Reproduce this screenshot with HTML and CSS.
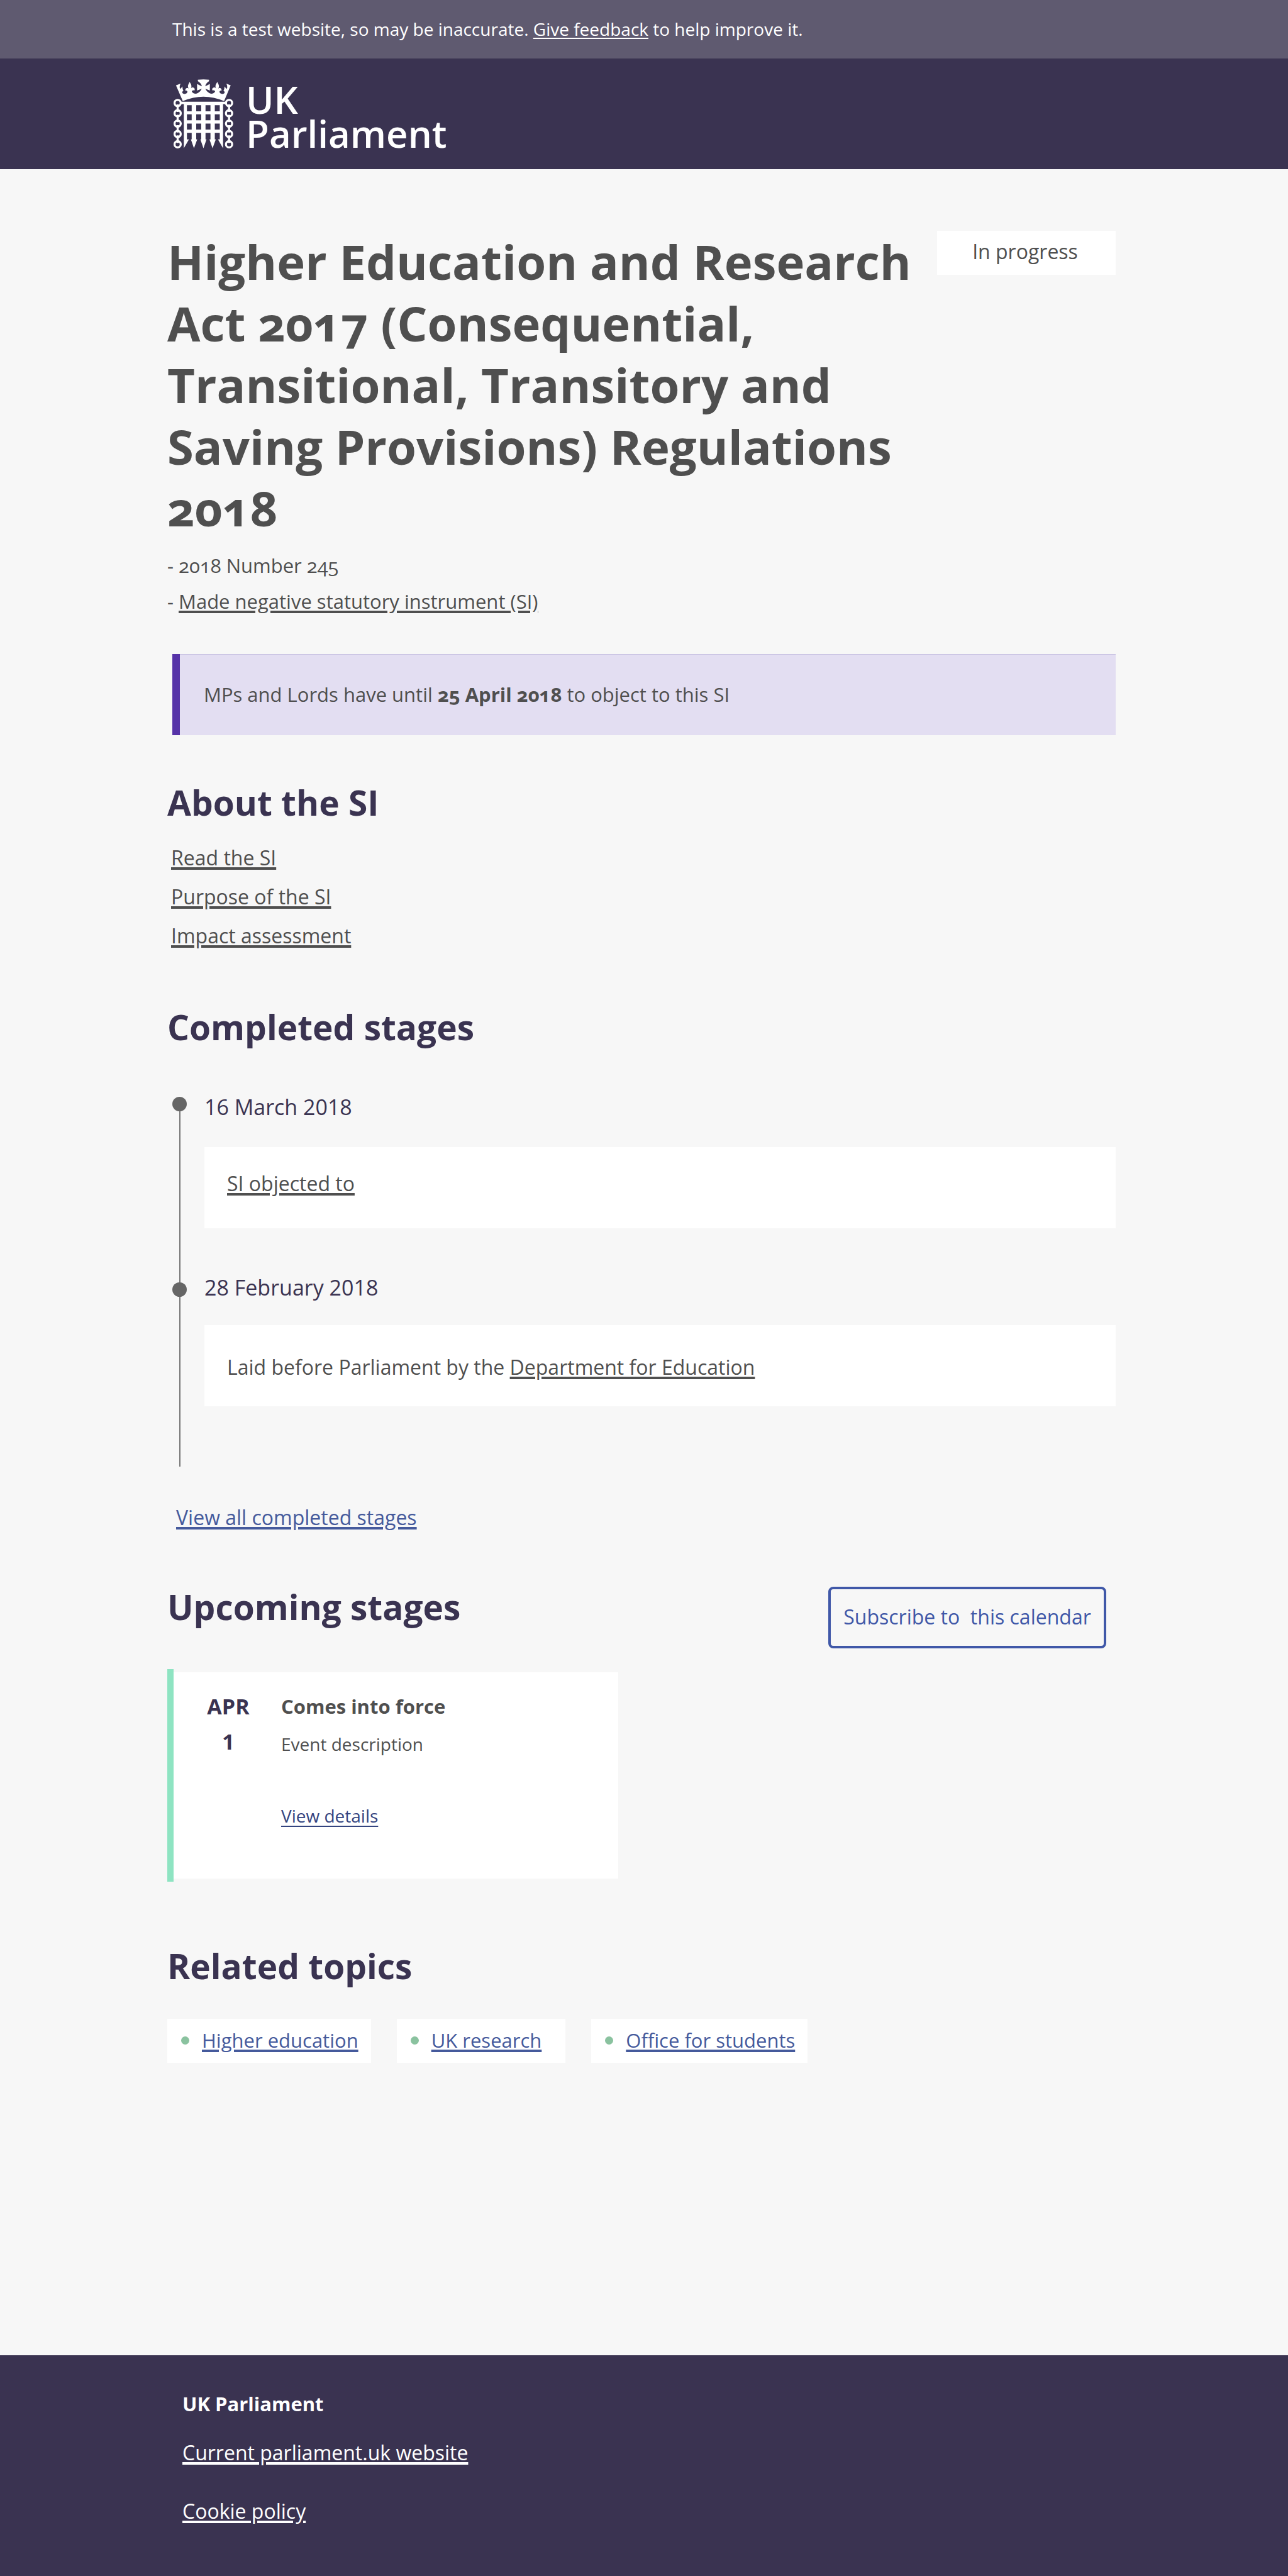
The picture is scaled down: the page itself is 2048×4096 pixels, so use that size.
FILE: index.html
```html
<!DOCTYPE html>
<html lang="en">
<head>
<meta charset="utf-8">
<meta name="viewport" content="width=device-width, initial-scale=1">
<title>Higher Education and Research Act 2017 Regulations 2018 - UK Parliament</title>
<link rel="stylesheet" href="styles.css">
</head>
<body>
<div class="test-banner">
  <p class="wrap test-banner-text">This is a test website, so may be inaccurate. <a href="#feedback">Give feedback</a> to help improve it.</p>
</div>
<header class="site-header">
  <div class="wrap">
    <a class="logo" href="#home">
      <svg class="logo-mark" viewBox="33 54 288 335" aria-hidden="true">
        <g fill="#fff">
          <path d="M44 84L66 75Q59 90 64 101L76 89Q74 100 80 109Q75 111 74 120Q83 128 91 124Q100 121 99 113Q94 107 90 110Q87 99 97 96Q103 96 106 100Q99 90 104 79L110 67L117 79Q121 90 116 98Q121 92 128 94Q137 97 134 108Q128 105 121 111Q119 116 129 122Q139 127 151 120Q163 114 169 100L146 109V77L169 88Q169 76 150 63V56Q177 53 204 56V63Q186 76 186 88L208 77V109L186 100Q192 114 204 120Q216 127 225 122Q235 116 233 111Q226 105 220 108Q217 97 226 94Q233 92 238 98Q233 90 237 79L244 67L250 79Q255 90 248 100Q252 96 257 96Q267 99 264 110Q260 107 255 113Q254 121 263 124Q272 128 280 120Q279 111 274 109Q280 100 278 89L290 101Q295 90 288 75L309 84L277 160Q177 117 77 160Z"/>
          <path d="M66 163H288V174H272V388L247 345H255V343H232V345H237L221 388L206 345H211V343H187V345H192L177 388L162 345H166V343H142V345H147L131 388L116 345H120V343H97V345H107L82 388V174H66Z"/>
        </g>
        <g fill="#3a3351">
          <path d="M97 180h23v29h-23zM142 180h24v29h-24zM187 180h24v29h-24zM232 180h24v29h-24zM97 224h23v29h-23zM142 224h24v29h-24zM187 224h24v29h-24zM232 224h24v29h-24zM97 269h23v29h-23zM142 269h24v29h-24zM187 269h24v29h-24zM232 269h24v29h-24zM97 314h23v30h-23zM142 314h24v30h-24zM187 314h24v30h-24zM232 314h24v30h-24z"/>
        </g>
        <g fill="none" stroke="#fff" stroke-width="10">
          <circle cx="52" cy="169" r="15"/><circle cx="52" cy="219" r="15"/><circle cx="52" cy="269" r="15"/><circle cx="52" cy="319" r="15"/><circle cx="52" cy="369" r="15"/>
          <circle cx="301" cy="169" r="15"/><circle cx="301" cy="219" r="15"/><circle cx="301" cy="269" r="15"/><circle cx="301" cy="319" r="15"/><circle cx="301" cy="369" r="15"/>
          <path d="M52 176V212M52 226V262M52 276V312M52 326V362M301 176V212M301 226V262M301 276V312M301 326V362"/>
        </g>
      </svg>
      <span class="logo-name">UK<br>Parliament</span>
    </a>
  </div>
</header>
<main class="wrap main">
  <div class="title-row">
    <h1>Higher Education and Research Act 2017 (Consequential, Transitional, Transitory and Saving Provisions) Regulations 2018</h1>
    <span class="status">In progress</span>
  </div>
  <div class="meta">
    <p>- 2018 Number 245</p>
    <p>- <a href="#procedure">Made negative statutory instrument (SI)</a></p>
  </div>
  <p class="notice">MPs and Lords have until <strong>25 April 2018</strong> to object to this SI</p>

  <section class="about">
    <h2>About the SI</h2>
    <ul class="link-list">
      <li><a href="#read">Read the SI</a></li>
      <li><a href="#purpose">Purpose of the SI</a></li>
      <li><a href="#impact">Impact assessment</a></li>
    </ul>
  </section>

  <section class="completed">
    <h2>Completed stages</h2>
    <ol class="timeline">
      <li class="stage stage-objected">
        <h3>16 March 2018</h3>
        <p class="stage-card"><a href="#objected">SI objected to</a></p>
      </li>
      <li class="stage stage-laid">
        <h3>28 February 2018</h3>
        <p class="stage-card">Laid before Parliament by the <a href="#dfe">Department for Education</a></p>
      </li>
    </ol>
    <p class="view-all"><a class="blue" href="#stages">View all completed stages</a></p>
  </section>

  <section class="upcoming">
    <div class="upcoming-head">
      <h2>Upcoming stages</h2>
      <button class="subscribe" type="button">Subscribe to&nbsp; this calendar</button>
    </div>
    <article class="event">
      <div class="event-body">
        <p class="event-date">APR<br>1</p>
        <div>
          <h3>Comes into force</h3>
          <p class="event-text">Event description</p>
          <a class="event-link" href="#details">View details</a>
        </div>
      </div>
    </article>
  </section>

  <section class="related">
    <h2>Related topics</h2>
    <ul class="topics">
      <li><a class="blue" href="#higher-education">Higher education</a></li>
      <li class="topic-wide"><a class="blue" href="#uk-research">UK research</a></li>
      <li><a class="blue" href="#ofs">Office for students</a></li>
    </ul>
  </section>
</main>
<footer class="site-footer">
  <div class="wrap footer-inner">
    <p class="footer-name">UK Parliament</p>
    <p class="footer-site"><a href="#current">Current parliament.uk website</a></p>
    <p class="footer-cookie"><a href="#cookies">Cookie policy</a></p>
  </div>
</footer>
</body>
</html>
```

FILE: styles.css
```css
* {
  box-sizing: border-box;
}

body {
  display: flex;
  flex-direction: column;
  min-height: 100vh;
  margin: 0;
  background: #f7f7f7;
  color: #4f4f4f;
  font-family: "Open Sans", "Noto Sans", sans-serif;
  font-size: 32px;
  line-height: 40px;
}

h1, h2, h3, p, ul, ol {
  margin: 0;
  padding: 0;
}

ul, ol {
  list-style: none;
}

a {
  color: inherit;
  text-decoration-thickness: 4px;
  text-underline-offset: 3px;
}

.blue {
  color: #455a9c;
}

.wrap {
  width: 100%;
  padding-left: 266px;
  padding-right: 274px;
}

.test-banner {
  padding: 26px 0 27px;
  background: #5f5a70;
  color: #fff;
  font-size: 28px;
}

.test-banner-text {
  padding-left: 274px;
}

.test-banner a {
  text-decoration-thickness: 2px;
}

.site-header {
  padding: 33px 0 30px;
  background: #3a3351;
}

.logo {
  display: flex;
  align-items: flex-start;
  gap: 20px;
  padding-left: 10px;
  color: #fff;
  text-decoration: none;
}

.logo-mark {
  width: 95px;
  height: 110px;
}

.logo-name {
  margin-top: 5px;
  font-size: 60px;
  font-weight: 600;
  line-height: 54px;
}

.main {
  flex: 1;
  padding-top: 98px;
  padding-bottom: 98px;
}

.title-row {
  display: flex;
  align-items: flex-start;
  justify-content: space-between;
  gap: 20px;
}

h1 {
  font-size: 76px;
  font-weight: 700;
  line-height: 98px;
  font-variant-numeric: oldstyle-nums;
}

.status {
  flex: none;
  width: 284px;
  padding: 13px 4px 17px 0;
  background: #fff;
  text-align: center;
}

.meta {
  margin-top: 14px;
  font-size: 31px;
  line-height: 57px;
  font-variant-numeric: oldstyle-nums;
}

.notice {
  margin: 55px 0 0 8px;
  padding: 44px 38px 45px;
  border-left: 12px solid #5633a8;
  box-shadow: inset 0 1px #c8c1e2;
  background: #e3def2;
  font-size: 31px;
  font-variant-numeric: oldstyle-nums;
}

h2 {
  color: #3a3351;
  font-size: 55px;
  font-weight: 700;
  line-height: 64px;
}

.about {
  margin-top: 75px;
}

.link-list {
  margin-top: 25px;
  padding-left: 6px;
  line-height: 62px;
}

.completed {
  margin-top: 82px;
}

.timeline {
  position: relative;
  margin: 71px 0 0 8px;
  padding: 0 0 96px 51px;
}

.timeline::before {
  content: "";
  position: absolute;
  top: 16px;
  bottom: 0;
  left: 11px;
  width: 2px;
  background: #777;
}

.stage {
  position: relative;
}

.stage::before {
  content: "";
  position: absolute;
  top: 8px;
  left: -51px;
  width: 23px;
  height: 23px;
  border-radius: 50%;
  background: #666;
}

.stage h3 {
  color: #3a3351;
  font-size: 34px;
  font-weight: 400;
  line-height: 48px;
}

.stage-card {
  margin-top: 40px;
  padding: 38px 36px 51px;
  background: #fff;
}

.stage-laid {
  margin-top: 70px;
}

.stage-laid::before {
  top: 16px;
}

.stage-laid .stage-card {
  margin-top: 36px;
  padding: 47px 36px 42px;
}

.view-all {
  margin-top: 61px;
  padding-left: 14px;
}

.upcoming {
  margin-top: 90px;
}

.upcoming-head {
  display: flex;
  align-items: flex-start;
  justify-content: space-between;
  padding-right: 15px;
}

.subscribe {
  width: 442px;
  height: 98px;
  padding: 0 0 2px;
  border: 4px solid #4058a8;
  border-radius: 8px;
  background: transparent;
  color: #4058a8;
  font: inherit;
  white-space: nowrap;
}

.event {
  max-width: 717px;
  margin-top: 33px;
  padding: 5px 0;
  border-left: 10px solid #8ee4c2;
}

.event-body {
  display: flex;
  gap: 35px;
  padding: 26px 40px 80px 38px;
  background: #fff;
}

.event-date {
  width: 98px;
  color: #3a3351;
  font-size: 34px;
  font-weight: 700;
  line-height: 56px;
  text-align: center;
}

.event h3 {
  font-size: 31px;
  font-weight: 700;
  line-height: 56px;
}

.event-text {
  margin-bottom: 62px;
  font-size: 28px;
  line-height: 64px;
}

.event-link {
  display: block;
  color: #33447f;
  font-size: 28px;
  text-decoration-thickness: 2px;
  text-underline-offset: 5px;
}

.related {
  margin-top: 102px;
}

.topics {
  display: flex;
  flex-wrap: wrap;
  gap: 41px;
  margin-top: 52px;
  font-size: 31px;
}

.topics li {
  display: flex;
  align-items: center;
  gap: 20px;
  padding: 14px 20px 16px 22px;
  background: #fff;
}

.topics li::before {
  content: "";
  width: 13px;
  height: 13px;
  border-radius: 50%;
  background: #8ac29f;
}

.topics .topic-wide {
  padding-right: 38px;
}

.site-footer {
  padding: 57px 0 83px;
  background: #3a3351;
  color: #fff;
}

.footer-inner {
  padding-left: 290px;
}

.footer-name {
  font-size: 31px;
  font-weight: 700;
}

.footer-site {
  margin-top: 38px;
}

.footer-cookie {
  margin-top: 53px;
}
```
